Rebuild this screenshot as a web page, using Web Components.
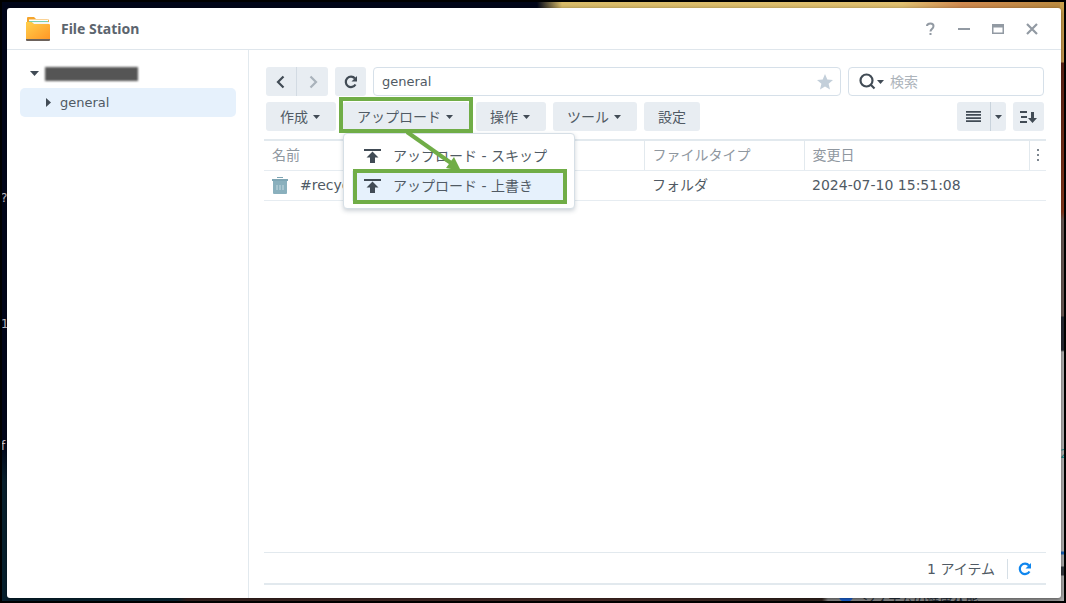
<!DOCTYPE html>
<html lang="ja">
<head>
<meta charset="utf-8">
<title>File Station</title>
<style>
  html, body { height: 100%; }
  body {
    margin: 0;
    overflow: hidden;
    font-family: "DejaVu Sans", "Noto Sans CJK JP", sans-serif;
    font-size: 14px;
    line-height: 20px;
    color: #505a64;
  }
</style>
</head>
<body>
<desk-top>
  <file-window heading="File Station">
    <folder-tree slot="side"></folder-tree>
    <path-bar></path-bar>
    <tool-bar></tool-bar>
    <file-list></file-list>
    <status-bar></status-bar>
  </file-window>
  <guide-marks slot="over"></guide-marks>
</desk-top>

<script>
// Attach an open shadow root filled with the given markup
function attach(el, html) {
  const template = document.createElement('template');
  template.innerHTML = html;
  el.attachShadow({ mode: 'open' }).appendChild(template.content.cloneNode(true));
}

// Reset shared by every element with native controls inside
const base = `
  * { box-sizing: border-box; }
  button, input { font: inherit; color: inherit; border: 0; margin: 0; padding: 0; background: none; }
  svg { display: block; }
`;

/**
 * Desktop with wallpaper and the windows on top
 */
class DeskTop extends HTMLElement {
  constructor() {
    super();
    attach(this, `
    <style>
      ${base}
      :host {
        display: flex;
        position: relative;
        box-sizing: border-box;
        min-height: 100vh;
        padding: 6px 3px 3px 5px;
        border: 2px solid #000;
        overflow: hidden;
        background:
          linear-gradient(#c9a04a 0, #c99a50 60px, #5f2416 61px, #8a3a1c 210px, #6b5a55 218px, #6b5a55 314px, #262a33 315px, #262a33 348px, #b2b2b2 350px, #b2b2b2 549px, #1863b8 550px, #1863b8 552px, #aaa 553px, #aaa 564px, #343a40 565px, #343a40 573px, #aaa 574px) right / 4px 100% no-repeat,
          linear-gradient(90deg, #000518 0, #000518 535px, #d9bc69 560px, #e0c070 900px, #d08a50 960px, #b98a40 100%) top / 100% 7px no-repeat,
          linear-gradient(90deg, #06202e 0, #0a2a38 175px, #3a2422 185px, #4a2c28 600px, #33241f 820px, #8a8a8a 826px, #a0a0a0 100%) bottom / 100% 5px no-repeat,
          linear-gradient(#01051a 0, #01051a 440px, #08202e 480px, #06202e 100%);
      }
      .bit { position: absolute; font-size: 12px; line-height: 16px; color: #c9c2c8; }
      .edge { left: -1px; }
      .teal { right: -4px; top: 444px; color: #1f8a8a; }
      .health { left: 860px; bottom: -7px; font-size: 13px; color: #26303a; }
      .info { left: 836px; bottom: -1px; width: 16px; height: 16px; border-radius: 8px; background: #1b64d8; }
    </style>
    <span class="bit edge" style="top: 188px">?</span>
    <span class="bit edge" style="top: 314px">1</span>
    <span class="bit edge" style="top: 436px">f</span>
    <span class="bit teal">2</span>
    <span class="bit info"></span>
    <span class="bit health">システムの健康状態</span>
    <slot></slot>
    <slot name="over"></slot>
    `);
  }
}

/**
 * Application window: title bar, side pane and main pane
 */
class FileWindow extends HTMLElement {
  constructor() {
    super();
    attach(this, `
    <style>
      ${base}
      :host {
        display: flex;
        flex-direction: column;
        flex: 1;
        min-width: 0;
        position: relative;
        background: #fff;
        border-radius: 3px;
        box-shadow: 0 1px 4px rgba(0, 0, 0, .5);
      }
      header {
        display: flex;
        align-items: center;
        height: 42px;
        padding: 0 19px 0 18px;
        border-bottom: 1px solid #dfe6ec;
      }
      h1 {
        flex: 1;
        margin: 0 0 0 10px;
        font: bold 14px/20px "Noto Sans", sans-serif;
        color: #5c656e;
      }
      .controls { display: flex; gap: 14px; }
      .controls button { width: 20px; height: 20px; }
      .body { display: flex; flex: 1; }
      aside { width: 242px; border-right: 1px solid #e2e9ee; padding: 9px 12px 0 13px; }
      main { display: flex; flex-direction: column; flex: 1; min-width: 0; padding: 17px 15px 13px; }
    </style>
    <header>
      <svg width="26" height="26" viewBox="0 0 26 26" aria-hidden="true">
        <defs>
          <linearGradient id="front" x1="0" y1="0" x2="1" y2="1">
            <stop offset="0" stop-color="#ffd04c"/><stop offset="1" stop-color="#ff9726"/>
          </linearGradient>
        </defs>
        <path d="M2 9V2q0-1 1-1h6l2 2h11q2 0 2 2v4z" fill="#f5a52c"/>
        <path d="M4 3.500h19v3H4z" fill="#fff"/>
        <path d="M4 5h19v2H4z" fill="#7ccfae"/>
        <path d="M7 6h17v2H7z" fill="#f2f5f4"/>
        <path d="M1 22h24v2q0 1-1 1H2q-1 0-1-1z" fill="#6c625b"/>
        <path d="M1 6h5q1 0 2 1l1 1h15q1 0 1 1v14H1z" fill="url(#front)"/>
      </svg>
      <h1></h1>
      <div class="controls">
        <button type="button" aria-label="ヘルプ"><svg width="20" height="20" fill="none" stroke="#929aa3" stroke-width="2"><path d="M7 7q0-2.500 3.500-2.500 3 0 3 2.500c0 3-3 3-3 5.500M10.500 14v2"/></svg></button>
        <button type="button" aria-label="最小化"><svg width="20" height="20" fill="#929aa3"><path d="M4 9h12v2H4z"/></svg></button>
        <button type="button" aria-label="最大化"><svg width="20" height="20" fill="#929aa3"><path fill-rule="evenodd" d="M4 5h12v10H4zM5.500 8.500v5h9v-5z"/></svg></button>
        <button type="button" aria-label="閉じる"><svg width="20" height="20" stroke="#929aa3" stroke-width="2.200"><path d="M5 5l10 10M15 5L5 15"/></svg></button>
      </div>
    </header>
    <div class="body">
      <aside><slot name="side"></slot></aside>
      <main><slot></slot></main>
    </div>
    `);
    this.shadowRoot.querySelector('h1').textContent = this.getAttribute('heading');
  }
}

/**
 * Folder tree in the side pane
 */
class FolderTree extends HTMLElement {
  constructor() {
    super();
    attach(this, `
    <style>
      ${base}
      :host { display: block; font-size: 13px; color: #414b55; }
      .row { display: flex; align-items: center; height: 29px; border-radius: 5px; }
      .root { padding-left: 10px; gap: 6px; }
      .child { padding-left: 26px; gap: 8px; background: #e6f1fc; color: #505a64; }
      .masked { width: 93px; height: 14px; background: #555; filter: blur(1px); }
    </style>
    <div class="row root">
      <svg width="9" height="5" fill="#414b55"><path d="M0 0h9L4.500 5z"/></svg>
      <span class="masked"></span>
    </div>
    <div class="row child">
      <svg width="6" height="9" fill="#414b55"><path d="M0 0v9l5-4.500z"/></svg>
      <span>general</span>
    </div>
    `);
  }
}

/**
 * Back / forward / reload, the current path and the search box
 */
class PathBar extends HTMLElement {
  constructor() {
    super();
    attach(this, `
    <style>
      ${base}
      :host { display: flex; gap: 7px; padding: 0 2px; }
      button { display: grid; place-items: center; height: 29px; width: 31px; border-radius: 3px; background: #e8edf2; }
      .pair { display: flex; }
      .pair button:first-child { border-radius: 3px 0 0 3px; border-right: 1px solid #d3dbe3; }
      .pair button:last-child { border-radius: 0 3px 3px 0; }
      .box { display: flex; align-items: center; height: 29px; border: 1px solid #d6e0e9; border-radius: 4px; }
      .box input { flex: 1; min-width: 0; outline: 0; height: 20px; }
      .box button { background: none; width: auto; height: 20px; }
      .path { flex: 1; padding: 0 7px 0 8px; font-size: 13px; }
      .search { width: 196px; padding: 0 8px 0 10px; gap: 6px; }
      .search button { display: flex; align-items: center; gap: 1px; }
      input::placeholder { color: #adb4bb; opacity: 1; }
    </style>
    <div class="pair">
      <button type="button" aria-label="戻る"><svg width="14" height="14" fill="none" stroke="#414b55" stroke-width="2.200"><path d="M9.500 1.500L4 7l5.500 5.500"/></svg></button>
      <button type="button" aria-label="進む"><svg width="14" height="14" fill="none" stroke="#a9b2bb" stroke-width="2.200"><path d="M4.500 1.500L10 7l-5.500 5.500"/></svg></button>
    </div>
    <button type="button" aria-label="更新"><svg width="14" height="14" fill="none" stroke="#414b55" stroke-width="2.200"><path d="M11.500 9.500A5.200 5.200 0 1 1 11 3.500"/><path d="M13 1v5.500H7.500z" fill="#414b55" stroke="none"/></svg></button>
    <div class="box path">
      <input type="text" aria-label="パス" value="general">
      <button type="button" aria-label="お気に入り"><svg width="16" height="16" fill="#c3cfda"><path d="M8 0l2.300 5.400 5.700.5-4.400 3.800 1.400 5.800-5-3.100-5 3.100 1.400-5.800L0 5.900l5.700-.5z"/></svg></button>
    </div>
    <div class="box search">
      <button type="button" aria-label="検索条件">
        <svg width="17" height="17" fill="none" stroke="#414b55" stroke-width="2.200"><circle cx="7.500" cy="7.500" r="6"/><path d="M11.500 11.500l4 4"/></svg>
        <svg width="7" height="4" fill="#414b55"><path d="M0 0h7L3.500 4z"/></svg>
      </button>
      <input type="text" aria-label="検索" placeholder="検索">
    </div>
    `);
  }
}

/**
 * Drop-down menu holding the upload actions
 */
class UploadMenu extends HTMLElement {
  constructor() {
    super();
    const icon = '<svg width="17" height="15" fill="#414b55"><path d="M0 0h17v2H0zM8.500 2.500L14.500 8.500H11V14H6V8.500H2.500z"/></svg>';
    attach(this, `
    <style>
      ${base}
      :host {
        display: block;
        box-sizing: border-box;
        width: 232px;
        padding: 7px 8px;
        background: #fff;
        border: 1px solid #d6dfe6;
        border-radius: 4px;
        box-shadow: 0 2px 4px rgba(60, 80, 100, .25);
      }
      button { display: flex; align-items: center; gap: 12px; width: 100%; height: 30px; padding: 0 12px; white-space: nowrap; }
      .active { background: #e6f1fc; }
    </style>
    <button type="button" role="menuitem">${icon}<span>アップロード - スキップ</span></button>
    <button type="button" role="menuitem" class="active">${icon}<span>アップロード - 上書き</span></button>
    `);
  }
}

/**
 * Action buttons above the list
 */
class ToolBar extends HTMLElement {
  constructor() {
    super();
    const caret = '<svg width="7" height="4" fill="#414b55"><path d="M0 0h7L3.500 4z"/></svg>';
    attach(this, `
    <style>
      ${base}
      :host { display: flex; gap: 7px; padding: 6px 2px 8px; }
      button {
        display: flex;
        align-items: center;
        justify-content: center;
        gap: 5px;
        height: 29px;
        padding: 0 16px 0 14px;
        border-radius: 3px;
        background: #e8edf2;
        white-space: nowrap;
      }
      .plain { padding: 0 14px; }
      .drop { position: relative; }
      upload-menu { position: absolute; left: 0; top: 31px; z-index: 1; }
      .view { display: flex; margin-left: auto; }
      .view button { padding: 0 9px; border-radius: 3px 0 0 3px; }
      .view button + button { padding: 0 4px; border-left: 1px solid #c9d3dc; border-radius: 0 3px 3px 0; }
      .sort { padding: 0 7px; }
    </style>
    <button type="button">作成${caret}</button>
    <div class="drop">
      <button type="button" aria-expanded="true">アップロード${caret}</button>
      <upload-menu role="menu"></upload-menu>
    </div>
    <button type="button">操作${caret}</button>
    <button type="button">ツール${caret}</button>
    <button type="button" class="plain">設定</button>
    <div class="view">
      <button type="button" aria-label="リスト表示"><svg width="15" height="12" fill="#414b55"><path d="M0 0h15v1.700H0zM0 3.100h15v1.700H0zM0 6.200h15v1.700H0zM0 9.300h15v1.700H0z"/></svg></button>
      <button type="button" aria-label="表示の種類">${caret}</button>
    </div>
    <button type="button" class="sort" aria-label="並べ替え"><svg width="17" height="14" fill="#414b55"><path d="M0 1h7v2H0zM1 6h6v2H1zM0 11h7v2H0zM11 2h3v6h3l-4.500 5L8 8h3z"/></svg></button>
    `);
  }
}

/**
 * Table with the files of the current folder
 */
class FileList extends HTMLElement {
  constructor() {
    super();
    attach(this, `
    <style>
      ${base}
      :host { display: block; flex: 1; border-bottom: 1px solid #e2e9ee; }
      table { width: 100%; table-layout: fixed; border-collapse: collapse; border-top: 2px solid #e2e9ee; }
      th, td { height: 30px; padding: 0 8px; border-bottom: 1px solid #e6ecf1; text-align: left; font-weight: normal; white-space: nowrap; }
      th { color: #8f979f; }
      th + th { border-left: 1px solid #e2e9ee; }
      .type { width: 160px; }
      .date { width: 225px; }
      .more { width: 17px; padding: 0; }
      .name { display: flex; align-items: center; gap: 12px; }
      .more svg { margin: 0 auto; }
    </style>
    <table>
      <thead>
        <tr>
          <th>名前</th>
          <th class="type">ファイルタイプ</th>
          <th class="date">変更日</th>
          <th class="more" aria-label="列"><svg width="2" height="12" fill="#7d868f"><path d="M0 0h2v2H0zM0 5h2v2H0zM0 10h2v2H0z"/></svg></th>
        </tr>
      </thead>
      <tbody>
        <tr>
          <td><div class="name">
            <svg width="16" height="17"><path d="M0 2h16v2H0zM5 0h6v1H5z" fill="#7fa6b4"/><path d="M1 4h14v12q0 1-1 1H2q-1 0-1-1z" fill="#8ab0bd"/><path d="M5 8v5M8 8v5M11 8v5" stroke="#c5dae1"/></svg>
            <span>#recycle</span>
          </div></td>
          <td>フォルダ</td>
          <td colspan="2">2024-07-10 15:51:08</td>
        </tr>
      </tbody>
    </table>
    `);
  }
}

/**
 * Item count and reload button below the list
 */
class StatusBar extends HTMLElement {
  constructor() {
    super();
    attach(this, `
    <style>
      ${base}
      :host {
        display: flex;
        align-items: center;
        justify-content: flex-end;
        height: 28px;
        padding-top: 2px;
        border-bottom: 2px solid #e2e9ee;
      }
      span { padding-right: 12px; }
      button { height: 20px; padding: 0 14px 0 10px; border-left: 1px solid #d6dfe6; }
    </style>
    <span>1 アイテム</span>
    <button type="button" aria-label="更新"><svg width="14" height="14" fill="none" stroke="#0f86ee" stroke-width="2.200"><path d="M11.500 9.500A5.200 5.200 0 1 1 11 3.500"/><path d="M13 1v5.500H7.500z" fill="#0f86ee" stroke="none"/></svg></button>
    `);
  }
}

/**
 * Green boxes and arrow that lead the reader through the two clicks
 */
class GuideMarks extends HTMLElement {
  constructor() {
    super();
    attach(this, `
    <style>
      :host { position: absolute; left: -2px; top: -2px; z-index: 2; pointer-events: none; }
      svg { display: block; }
    </style>
    <svg width="600" height="220" fill="none" stroke="#70ad47" stroke-width="4">
      <rect x="341" y="99" width="130" height="32"/>
      <rect x="355" y="171" width="210" height="31"/>
      <path d="M407 132L451 163"/>
      <path d="M461 171L446 168L454 157z" fill="#70ad47" stroke="none"/>
    </svg>
    `);
  }
}

customElements.define('desk-top', DeskTop);
customElements.define('file-window', FileWindow);
customElements.define('folder-tree', FolderTree);
customElements.define('path-bar', PathBar);
customElements.define('upload-menu', UploadMenu);
customElements.define('tool-bar', ToolBar);
customElements.define('file-list', FileList);
customElements.define('status-bar', StatusBar);
customElements.define('guide-marks', GuideMarks);
</script>
</body>
</html>
